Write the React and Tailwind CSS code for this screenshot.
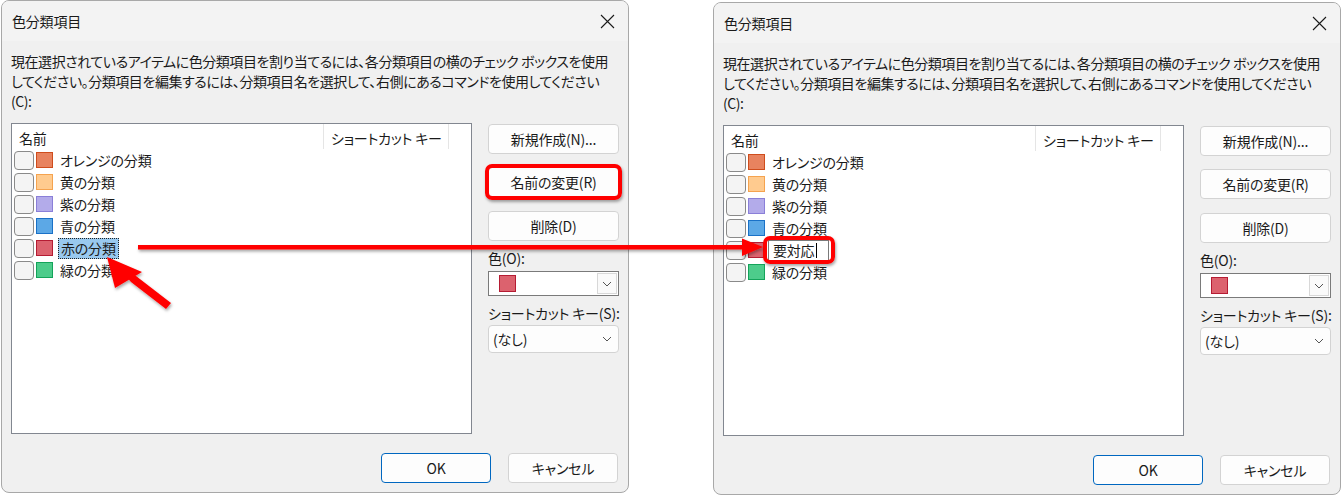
import React from "react";

const F = "font-['Noto_Sans_CJK_JP','Noto_Sans',sans-serif] [font-feature-settings:'palt'] tracking-[-0.2px]";

const CATS = [
  { name: "オレンジの分類", fill: "#e8835f", border: "#cf4d1d" },
  { name: "黄の分類", fill: "#ffcb8f", border: "#f5a34f" },
  { name: "紫の分類", fill: "#b3abea", border: "#8a7fd8" },
  { name: "青の分類", fill: "#5ca8e6", border: "#1a71c7" },
  { name: "赤の分類", fill: "#dc626e", border: "#b51c33" },
  { name: "緑の分類", fill: "#4dcc8b", border: "#14a35a" },
];

function XIcon() {
  return (
    <svg width="15" height="15" viewBox="0 0 15 15">
      <path d="M1 1 L14 14 M14 1 L1 14" stroke="#1a1a1a" strokeWidth="1.1" fill="none" />
    </svg>
  );
}

function Chevron() {
  return (
    <svg width="10" height="6" viewBox="0 0 10 6">
      <path d="M1 1 L5 5 L9 1" stroke="#555" strokeWidth="1" fill="none" />
    </svg>
  );
}

function Btn({ children, highlight, primary }) {
  return (
    <div className="relative">
      <div
        className={
          "h-[30px] flex items-center justify-center rounded-[4px] bg-[#fdfdfd] text-[14px] text-[#1a1a1a] " +
          (primary ? "border border-[#0067c0]" : "border border-[#d3d3d3]")
        }
      >
        {children}
      </div>
      {highlight && (
        <div className="absolute -inset-[3px] rounded-[7px] border-[4px] border-[#ff0000] shadow-[1px_2px_3px_rgba(0,0,0,0.35)]" />
      )}
    </div>
  );
}

function Row({ cat, mode }) {
  return (
    <div className="h-[22px] flex items-center pl-[2px]">
      <div className="w-[20px] h-[19px] rounded-[4px] border border-[#8a8a8a] bg-[#f4f4f4]" />
      <div
        className="ml-[2px] w-[17px] h-[16px] border"
        style={{ background: cat.fill, borderColor: cat.border }}
      />
      {mode === "selected" ? (
        <div className="ml-[5px] h-[21px] px-[2px] flex items-center bg-[#99c9ef] border border-dotted border-[#222] text-[14px] leading-none">
          {cat.name}
        </div>
      ) : mode === "edit" ? (
        <div className="relative ml-[3px]">
          <div className="h-[21px] w-[61px] pl-[4px] flex items-center bg-white border border-[#7a7a7a] text-[14px] leading-none">
            要対応<span className="ml-[2px] w-px h-[15px] bg-black" />
          </div>
          <div className="absolute -left-[5px] -top-[4px] w-[72px] h-[28px] rounded-[7px] border-[4px] border-[#ff0000] shadow-[1px_2px_3px_rgba(0,0,0,0.35)]" />
        </div>
      ) : (
        <div className="ml-[7px] text-[14px] leading-none">{cat.name}</div>
      )}
    </div>
  );
}

function Dialog({ right }) {
  return (
    <div className={"w-[628px] h-[493px] rounded-[8px] border border-[#a8a8a8] bg-[#f0f0f0] flex flex-col overflow-hidden text-[#1a1a1a] " + F}>
      <div className="h-[40px] shrink-0 flex items-center justify-between pl-[10px] pr-[13px] bg-[#f3f3f3]">
        <span className="text-[14px]">色分類項目</span>
        <XIcon />
      </div>
      <div className="px-[9px] pt-[10px] text-[14px] leading-[20px] whitespace-nowrap tracking-[-0.45px]">
        <div>現在選択されているアイテムに色分類項目を割り当てるには、各分類項目の横のチェック ボックスを使用</div>
        <div>してください。分類項目を編集するには、分類項目名を選択して、右側にあるコマンドを使用してください</div>
        <div>(C):</div>
      </div>
      <div className="flex pl-[9px] mt-[12px] gap-[16px]">
        <div className="w-[461px] h-[311px] bg-white border border-[#828790] flex flex-col">
          <div className="h-[25px] flex text-[14px] leading-none">
            <div className="w-[312px] pl-[7px] pt-[7px] border-r border-[#e5e5e5]">名前</div>
            <div className="w-[125px] pl-[7px] pt-[7px] border-r border-[#e5e5e5]">ショートカット キー</div>
          </div>
          {CATS.map((c, i) => (
            <Row key={i} cat={c} mode={i === 4 ? (right ? "edit" : "selected") : "normal"} />
          ))}
        </div>
        <div className="w-[131px] flex flex-col pt-[1px]">
          <Btn>新規作成(N)...</Btn>
          <div className="mt-[13px]">
            <Btn highlight={!right}>名前の変更(R)</Btn>
          </div>
          <div className="mt-[14px]">
            <Btn>削除(D)</Btn>
          </div>
          <div className="mt-[7px] h-[20px] text-[14px] leading-[20px]">色(O):</div>
          <div className="mt-[3px] h-[25px] bg-white border border-[#7a7a7a] flex items-center">
            <div className="ml-[10px] w-[17px] h-[17px] bg-[#dc626e] border border-[#b51c33]" />
            <div className="ml-auto mr-[1px] w-[20px] h-[21px] border border-[#d8d8d8] bg-[#fafafa] flex items-center justify-center">
              <Chevron />
            </div>
          </div>
          <div className="mt-[7px] h-[20px] text-[14px] leading-[20px] whitespace-nowrap">ショートカット キー(S):</div>
          <div className="mt-[2px] h-[28px] rounded-[4px] bg-[#fdfdfd] border border-[#d3d3d3] flex items-center pl-[4px] pr-[6px] text-[14px]">
            <span>(なし)</span>
            <span className="ml-auto"><Chevron /></span>
          </div>
        </div>
      </div>
      <div className="flex justify-end gap-[17px] pr-[10px] mt-[19px]">
        <div className="w-[110px]"><Btn primary>OK</Btn></div>
        <div className="w-[110px]"><Btn>キャンセル</Btn></div>
      </div>
    </div>
  );
}

function Arrows() {
  return (
    <svg className="absolute inset-0 pointer-events-none" width="1344" height="495" viewBox="0 0 1344 495">
      <defs>
        <filter id="sh" x="-10%" y="-50%" width="120%" height="200%">
          <feDropShadow dx="1" dy="2" stdDeviation="1.5" floodColor="#000" floodOpacity="0.35" />
        </filter>
      </defs>
      <g filter="url(#sh)" fill="#ff0000">
        <rect x="138" y="245" width="608" height="4.5" />
        <polygon points="763,247 742,238.5 742,256" />
        <polygon points="107,257 115,288 142,272" />
        <polygon points="126,276 131,282 166,309 171,303 136,276" />
      </g>
    </svg>
  );
}

export default function App() {
  return (
    <div className="relative w-[1344px] h-[495px] bg-white overflow-hidden">
      <div className="flex pl-[1px] pt-0 gap-[84px]">
        <div><Dialog /></div>
        <div className="pt-[2px]"><Dialog right /></div>
      </div>
      <Arrows />
    </div>
  );
}
